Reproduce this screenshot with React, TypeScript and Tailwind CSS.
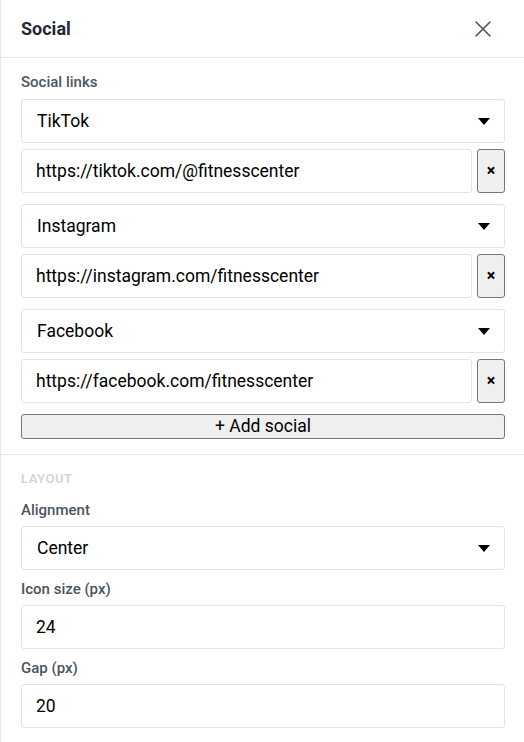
import { X } from "lucide-react";

type Link = { network: string; url: string };

const links: Link[] = [
  { network: "TikTok", url: "https://tiktok.com/@fitnesscenter" },
  { network: "Instagram", url: "https://instagram.com/fitnesscenter" },
  { network: "Facebook", url: "https://facebook.com/fitnesscenter" },
];

function Caret() {
  return (
    <svg width="12" height="7" viewBox="0 0 12 7" className="shrink-0">
      <path d="M0 0h12L6 7z" fill="#000" />
    </svg>
  );
}

function SelectBox({ value }: { value: string }) {
  return (
    <div className="flex h-[44px] items-center justify-between rounded-[3px] border border-[#e3e3e3] bg-white pl-[15px] pr-[14px] text-[17.5px] text-black">
      <span>{value}</span>
      <Caret />
    </div>
  );
}

function TextBox({ value }: { value: string }) {
  return (
    <div className="flex h-[44px] flex-1 items-center rounded-[3px] border border-[#e3e3e3] bg-white px-[14px] text-[17.5px] text-black">
      {value}
    </div>
  );
}

function Label({ children }: { children: string }) {
  return (
    <div className="mb-[6px] text-[15px] leading-5 font-medium text-[#4b5563]">
      {children}
    </div>
  );
}

export default function App() {
  return (
    <div
      className="h-[742px] w-[524px] overflow-hidden border-l border-[#e5e7eb] bg-white"
      style={{ fontFamily: "Roboto, 'Liberation Sans', sans-serif" }}
    >
      {/* Header */}
      <div className="flex h-[58px] items-center justify-between border-b border-[#e5e7eb] pl-[20px] pr-[27px]">
        <h2 className="text-[18px] font-bold text-[#1f2937]">Social</h2>
        <X className="h-[28px] w-[28px] text-[#4b5563]" strokeWidth={1.4} />
      </div>

      {/* Social links */}
      <div className="border-b border-[#e5e7eb] pl-[20px] pr-[19px] pt-[14px] pb-[15px]">
        <div className="mb-[7px] text-[15px] leading-5 font-medium text-[#4b5563]">
          Social links
        </div>
        <div className="flex flex-col gap-[11px]">
          {links.map((l) => (
            <div key={l.network} className="flex flex-col gap-[6px]">
              <SelectBox value={l.network} />
              <div className="flex gap-[5px]">
                <TextBox value={l.url} />
                <button className="flex h-[44px] w-[28px] items-center justify-center rounded-[3px] border border-[#767676] bg-[#efefef] text-[16px] font-bold text-black">
                  ×
                </button>
              </div>
            </div>
          ))}
          <button className="h-[25px] w-full rounded-[3px] border border-[#767676] bg-[#efefef] text-[17.5px] leading-none text-black">
            + Add social
          </button>
        </div>
      </div>

      {/* Layout */}
      <div className="pl-[20px] pr-[19px] pt-[16px]">
        <div className="text-[13px] leading-4 font-semibold tracking-[0.04em] text-[#d1d5db]">
          LAYOUT
        </div>
        <div className="mt-[13px]">
          <Label>Alignment</Label>
          <SelectBox value="Center" />
        </div>
        <div className="mt-[9px]">
          <Label>Icon size (px)</Label>
          <TextBox value="24" />
        </div>
        <div className="mt-[9px]">
          <Label>Gap (px)</Label>
          <TextBox value="20" />
        </div>
      </div>
    </div>
  );
}
